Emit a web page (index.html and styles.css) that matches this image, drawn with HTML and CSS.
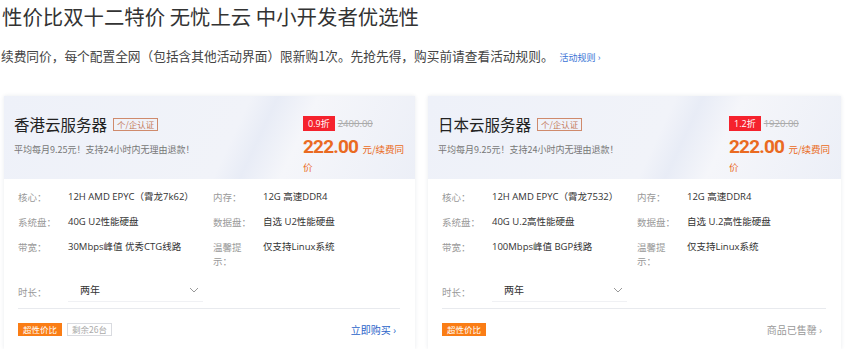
FILE: index.html
```html
<!DOCTYPE html>
<html lang="zh-CN">

<head>
    <meta charset="UTF-8">
    <title>双十二特价</title>
    <link rel="stylesheet" href="styles.css">
</head>

<body>
    <h1 class="title">性价比双十二特价 无忧上云 中小开发者优选性</h1>
    <p class="intro">续费同价，每个配置全网（包括含其他活动界面）限新购1次。先抢先得，购买前请查看活动规则。<a class="rules" href="#">活动规则 ›</a></p>

    <section class="cards">
        <article class="card">
            <div class="card-head">
                <div class="head-left">
                    <h3>香港云服务器 <span class="cert">个/企认证</span></h3>
                    <p class="head-sub">平均每月9.25元！支持24小时内无理由退款！</p>
                </div>
                <div class="price">
                    <div class="price-top"><span class="discount">0.9折</span><s class="old">2400.00</s></div>
                    <div class="price-now"><b>222.00</b> <span>元/续费同</span><span>价</span></div>
                </div>
            </div>
            <div class="card-body">
                <div class="specs">
                    <span class="lbl">核心：</span><span class="val">12H AMD EPYC（霄龙7k62）</span>
                    <span class="lbl">内存：</span><span class="val">12G 高速DDR4</span>
                    <span class="lbl">系统盘：</span><span class="val">40G U2性能硬盘</span>
                    <span class="lbl">数据盘：</span><span class="val">自选 U2性能硬盘</span>
                    <span class="lbl">带宽：</span><span class="val">30Mbps峰值 优秀CTG线路</span>
                    <span class="lbl">温馨提示：</span><span class="val">仅支持Linux系统</span>
                </div>
                <div class="term">
                    <span class="lbl">时长：</span>
                    <div class="select">两年
                        <svg width="10" height="6" viewBox="0 0 10 6"><path d="M1 1l4 4 4-4" fill="none" stroke="#999" stroke-width="1"/></svg>
                    </div>
                </div>
                <div class="card-foot">
                    <div class="tags"><span class="hot">超性价比</span><span class="stock">剩余26台</span></div>
                    <a class="buy" href="#">立即购买 ›</a>
                </div>
            </div>
        </article>

        <article class="card">
            <div class="card-head">
                <div class="head-left">
                    <h3>日本云服务器 <span class="cert">个/企认证</span></h3>
                    <p class="head-sub">平均每月9.25元！支持24小时内无理由退款！</p>
                </div>
                <div class="price">
                    <div class="price-top"><span class="discount">1.2折</span><s class="old">1920.00</s></div>
                    <div class="price-now"><b>222.00</b> <span>元/续费同</span><span>价</span></div>
                </div>
            </div>
            <div class="card-body">
                <div class="specs">
                    <span class="lbl">核心：</span><span class="val">12H AMD EPYC（霄龙7532）</span>
                    <span class="lbl">内存：</span><span class="val">12G 高速DDR4</span>
                    <span class="lbl">系统盘：</span><span class="val">40G U.2高性能硬盘</span>
                    <span class="lbl">数据盘：</span><span class="val">自选 U.2高性能硬盘</span>
                    <span class="lbl">带宽：</span><span class="val">100Mbps峰值 BGP线路</span>
                    <span class="lbl">温馨提示：</span><span class="val">仅支持Linux系统</span>
                </div>
                <div class="term">
                    <span class="lbl">时长：</span>
                    <div class="select">两年
                        <svg width="10" height="6" viewBox="0 0 10 6"><path d="M1 1l4 4 4-4" fill="none" stroke="#999" stroke-width="1"/></svg>
                    </div>
                </div>
                <div class="card-foot">
                    <div class="tags"><span class="hot">超性价比</span></div>
                    <a class="buy sold" href="#">商品已售罄 ›</a>
                </div>
            </div>
        </article>
    </section>
</body>

</html>
```

FILE: styles.css
```css
* {
    box-sizing: border-box;
}

body {
    margin: 0;
    padding: 0 5px 0 4px;
    background-color: #fff;
    font-family: "Open Sans", "Noto Sans CJK SC", sans-serif;
    color: #333;
}

a {
    text-decoration: none;
}

.title {
    margin: 0 0 0 -2px;
    padding-top: 2px;
    font-family: "Noto Sans CJK SC", sans-serif;
    font-size: 20.4px;
    font-weight: 400;
    line-height: 28px;
    color: #333;
}

.intro {
    margin: 16px 0 0 -3px;
    font-family: "Noto Sans CJK SC", sans-serif;
    font-size: 12.7px;
    line-height: 20px;
    color: #444;
}

.rules {
    margin-left: 6px;
    font-size: 9px;
    color: #3b74d6;
}

.cards {
    display: grid;
    grid-template-columns: 411px 413px;
    gap: 13px;
    margin-top: 28px;
}

.card {
    background: #fff;
    box-shadow: 0 0 4px rgba(30, 50, 90, 0.10);
    height: 253px;
}

.card-head {
    height: 83px;
    display: flex;
    justify-content: space-between;
    padding: 15px 8px 0 10px;
    background: linear-gradient(115deg, #eef1f9 0%, #f1f3f9 55%, #e8ecf6 61%, #f5f6fa 70%, #eceff7 100%);
}

.card-head h3 {
    margin: 0;
    font-family: "Noto Sans CJK SC", sans-serif;
    font-size: 15.5px;
    font-weight: 400;
    line-height: 26px;
    color: #222;
    display: flex;
    align-items: center;
}

.cert {
    margin-left: 6px;
    padding: 0 3px;
    border: 1px solid #cf8a6c;
    font-size: 8.5px;
    line-height: 11px;
    color: #c47a5a;
}

.head-sub {
    margin: 6px 0 0;
    font-family: "Noto Sans CJK SC", sans-serif;
    font-size: 9px;
    color: #777;
}

.price {
    width: 104px;
    padding-top: 5px;
}

.price-top {
    display: flex;
    align-items: center;
}

.discount {
    background: #f5222d;
    color: #fff;
    font-size: 9px;
    line-height: 15px;
    padding: 0 5px;
}

.old {
    margin-left: 3px;
    font-size: 9.5px;
    color: #aaa;
}

.price-now {
    margin-top: 6px;
    color: #ea6a21;
    line-height: 16px;
}

.price-now b {
    display: inline-block;
    font-family: Roboto, sans-serif;
    font-size: 19px;
    letter-spacing: -0.8px;
    line-height: 20px;
    font-weight: 700;
}

.price-now span {
    font-size: 9.5px;
    font-family: "Noto Sans CJK SC", sans-serif;
}

.card-body {
    padding: 11px 15px 0 14px;
}

.specs {
    display: grid;
    grid-template-columns: 50px 145px 50px 1fr;
    row-gap: 11px;
    align-items: start;
}

.lbl {
    width: 40px;
    font-family: "Noto Sans CJK SC", sans-serif;
    font-size: 9.5px;
    line-height: 14px;
    color: #999;
}

.val {
    font-size: 9.5px;
    line-height: 14px;
    color: #333;
}

.term {
    display: flex;
    align-items: center;
    margin-top: 14px;
}

.term .lbl {
    width: 50px;
}

.select {
    width: 135px;
    display: flex;
    justify-content: space-between;
    align-items: center;
    padding: 0 4px 4px 12px;
    border-bottom: 1px solid #f0f1f4;
    font-family: "Noto Sans CJK SC", sans-serif;
    font-size: 10px;
    color: #333;
}

.card-foot {
    margin-top: 6px;
    padding-top: 13px;
    border-top: 1px solid #e8eaee;
    display: flex;
    justify-content: space-between;
    align-items: center;
}

.tags {
    display: flex;
    gap: 5px;
}

.hot,
.stock {
    font-family: "Noto Sans CJK SC", sans-serif;
    font-size: 8.5px;
    line-height: 11px;
    padding: 0 4px;
}

.hot {
    background: #fa7d15;
    color: #fff;
    border: 1px solid #fa7d15;
}

.stock {
    border: 1px solid #d9dbe0;
    color: #aaa;
}

.buy {
    font-family: "Noto Sans CJK SC", sans-serif;
    font-size: 10px;
    color: #2a63c9;
    margin-right: 4px;
}

.buy.sold {
    color: #999;
}
```
